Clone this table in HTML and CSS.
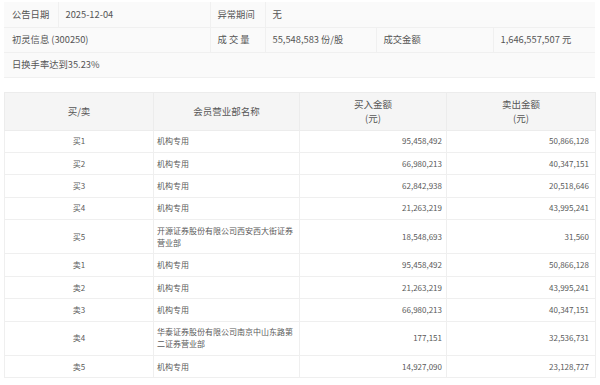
FILE: index.html
```html
<!DOCTYPE html>
<html lang="zh-CN">
<head>
  <meta charset="UTF-8">
  <title>龙虎榜明细</title>
  <link rel="stylesheet" href="styles.css">
</head>
<body>
  <div class="wrap">
    <table class="info-table">
      <colgroup>
        <col style="width:54px">
        <col style="width:152px">
        <col style="width:55px">
        <col style="width:111px">
        <col style="width:117px">
        <col style="width:102px">
      </colgroup>
      <tr>
        <td>公告日期</td>
        <td>2025-12-04</td>
        <td>异常期间</td>
        <td colspan="3">无</td>
      </tr>
      <tr>
        <td colspan="2">初灵信息 (300250)</td>
        <td>成 交 量</td>
        <td>55,548,583 份/股</td>
        <td>成交金额</td>
        <td>1,646,557,507 元</td>
      </tr>
      <tr>
        <td colspan="6">日换手率达到35.23%</td>
      </tr>
    </table>

    <table class="trade-table">
      <colgroup>
        <col style="width:149px">
        <col style="width:146px">
        <col style="width:147px">
        <col style="width:149px">
      </colgroup>
      <thead>
        <tr>
          <th>买/卖</th>
          <th>会员营业部名称</th>
          <th>买入金额<br>(元)</th>
          <th>卖出金额<br>(元)</th>
        </tr>
      </thead>
      <tbody>
        <tr><td class="side">买1</td><td class="name">机构专用</td><td class="num">95,458,492</td><td class="num">50,866,128</td></tr>
        <tr><td class="side">买2</td><td class="name">机构专用</td><td class="num">66,980,213</td><td class="num">40,347,151</td></tr>
        <tr><td class="side">买3</td><td class="name">机构专用</td><td class="num">62,842,938</td><td class="num">20,518,646</td></tr>
        <tr><td class="side">买4</td><td class="name">机构专用</td><td class="num">21,263,219</td><td class="num">43,995,241</td></tr>
        <tr><td class="side">买5</td><td class="name">开源证券股份有限公司西安西大街证券营业部</td><td class="num">18,548,693</td><td class="num">31,560</td></tr>
        <tr><td class="side">卖1</td><td class="name">机构专用</td><td class="num">95,458,492</td><td class="num">50,866,128</td></tr>
        <tr><td class="side">卖2</td><td class="name">机构专用</td><td class="num">21,263,219</td><td class="num">43,995,241</td></tr>
        <tr><td class="side">卖3</td><td class="name">机构专用</td><td class="num">66,980,213</td><td class="num">40,347,151</td></tr>
        <tr><td class="side">卖4</td><td class="name">华泰证券股份有限公司南京中山东路第二证券营业部</td><td class="num">177,151</td><td class="num">32,536,731</td></tr>
        <tr><td class="side">卖5</td><td class="name">机构专用</td><td class="num">14,927,090</td><td class="num">23,128,727</td></tr>
      </tbody>
    </table>
  </div>
</body>
</html>
```

FILE: styles.css
```css
* {
  box-sizing: border-box;
}

body {
  margin: 0;
  padding: 2px 0 0 4px;
  background-color: #fff;
  color: #555;
  font-family: "Noto Sans CJK SC", "Noto Sans", sans-serif;
}

.wrap {
  width: 591px;
}

table {
  width: 100%;
  border-collapse: collapse;
  table-layout: fixed;
}

/* top summary */
.info-table {
  background-color: #fafafa;
  margin-bottom: 14px;
}

.info-table td {
  height: 25px;
  padding: 0 6px 0 7px;
  border: 1px solid #f0f0f0;
  font-size: 9.3px;
  line-height: 13px;
  vertical-align: middle;
  white-space: nowrap;
}

.info-table tr:first-child td {
  border-top: none;
}

.info-table td:first-child {
  border-left: none;
  padding-left: 8px;
}

.info-table td:last-child {
  border-right: none;
}

/* trade detail */
.trade-table {
  border: 1px solid #ececec;
}

.trade-table th {
  height: 38px;
  padding: 0 4px;
  background-color: #f5f5f5;
  border: 1px solid #ececec;
  font-size: 9.5px;
  font-weight: normal;
  line-height: 14px;
  text-align: center;
  vertical-align: middle;
}

.trade-table td {
  padding: 4.8px 4px 4.6px;
  border: 1px solid #efefef;
  color: #5a5a5a;
  font-size: 8px;
  line-height: 12px;
  vertical-align: middle;
}

.trade-table .side {
  text-align: center;
}

.trade-table .name {
  padding-left: 3px;
}

.trade-table .num {
  text-align: right;
  padding-right: 4px;
}

.trade-table td:last-child {
  padding-right: 6px;
}
```
